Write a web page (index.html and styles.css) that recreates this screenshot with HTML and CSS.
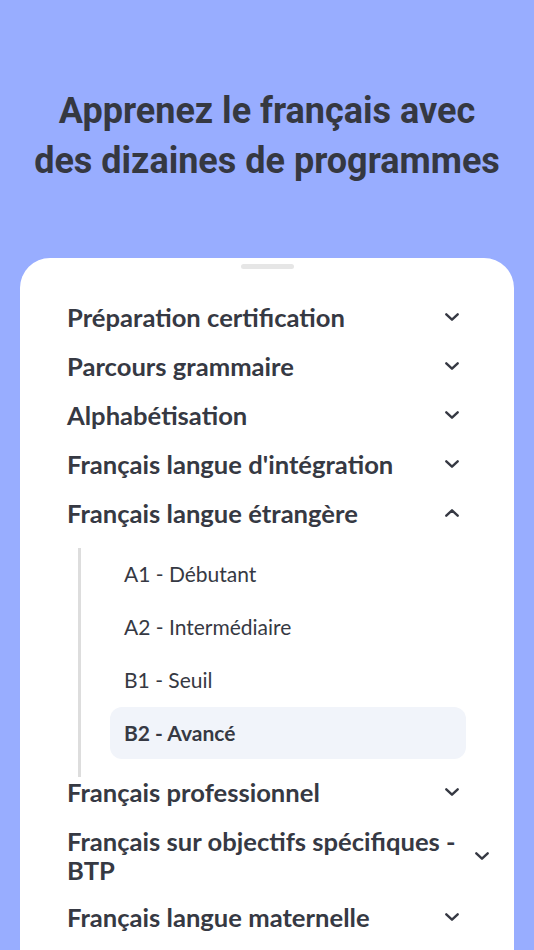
FILE: index.html
```html
<!DOCTYPE html>
<html lang="fr">
<head>
<meta charset="utf-8">
<title>Programmes</title>
<link rel="stylesheet" href="styles.css">
</head>
<body>
<header class="hero">
  <h1 class="hero-title">Apprenez le français avec<br>des dizaines de programmes</h1>
</header>
<main class="sheet">
  <div class="handle"></div>
  <ul class="menu">
    <li class="row"><span class="row-title">Préparation certification</span><svg class="chev" viewBox="0 0 14 8"><polyline points="1.3,1.3 7,6.7 12.7,1.3"/></svg></li>
    <li class="row"><span class="row-title">Parcours grammaire</span><svg class="chev" viewBox="0 0 14 8"><polyline points="1.3,1.3 7,6.7 12.7,1.3"/></svg></li>
    <li class="row"><span class="row-title">Alphabétisation</span><svg class="chev" viewBox="0 0 14 8"><polyline points="1.3,1.3 7,6.7 12.7,1.3"/></svg></li>
    <li class="row"><span class="row-title">Français langue d'intégration</span><svg class="chev" viewBox="0 0 14 8"><polyline points="1.3,1.3 7,6.7 12.7,1.3"/></svg></li>
    <li class="row"><span class="row-title">Français langue étrangère</span><svg class="chev" viewBox="0 0 14 8"><polyline points="1.3,6.7 7,1.3 12.7,6.7"/></svg></li>
    <li class="sub">
      <ul class="sub-list">
        <li class="sub-item">A1 - Débutant</li>
        <li class="sub-item">A2 - Intermédiaire</li>
        <li class="sub-item">B1 - Seuil</li>
        <li class="sub-item sub-item--active">B2 - Avancé</li>
      </ul>
    </li>
    <li class="row"><span class="row-title">Français professionnel</span><svg class="chev" viewBox="0 0 14 8"><polyline points="1.3,1.3 7,6.7 12.7,1.3"/></svg></li>
    <li class="row row--wrap"><span class="row-title">Français sur objectifs spécifiques - BTP</span><svg class="chev" viewBox="0 0 14 8"><polyline points="1.3,1.3 7,6.7 12.7,1.3"/></svg></li>
    <li class="row"><span class="row-title">Français langue maternelle</span><svg class="chev" viewBox="0 0 14 8"><polyline points="1.3,1.3 7,6.7 12.7,1.3"/></svg></li>
  </ul>
</main>
</body>
</html>
```
FILE: styles.css
```css
* { box-sizing: border-box; }
html, body { margin: 0; padding: 0; }
body {
  width: 534px;
  height: 950px;
  overflow: hidden;
  background: #98adff;
  font-family: Lato, "Open Sans", sans-serif;
  color: #363943;
}
.hero {
  height: 258px;
  padding-top: 86px;
}
.hero-title {
  margin: 0;
  font-family: Roboto, "Liberation Sans", sans-serif;
  font-weight: 700;
  font-size: 36px;
  line-height: 50px;
  text-align: center;
  color: #353841;
}
.sheet {
  margin: 0 20px;
  height: 692px;
  background: #fff;
  border-radius: 30px 30px 0 0;
  padding-top: 6px;
}
.handle {
  width: 53px;
  height: 5px;
  margin: 0 auto;
  border-radius: 3px;
  background: #e6e6e6;
}
.menu {
  list-style: none;
  margin: 23.5px 0 0;
  padding: 0 25px 0 47px;
}
.row {
  display: flex;
  align-items: center;
  padding: 10px 0;
}
.row-title {
  width: 378px;
  font-weight: 700;
  font-size: 25.6px;
  line-height: 29px;
}
.chev {
  width: 14px;
  height: 8px;
  flex: none;
  fill: none;
  stroke: #363943;
  stroke-width: 2.4;
  stroke-linecap: round;
  stroke-linejoin: round;
}
.row--wrap {
  padding-bottom: 8px;
}
.row--wrap .row-title {
  width: auto;
  flex: 1;
  padding-right: 10px;
}
.sub {
  margin: 10px 0 -9.5px 11px;
}
.sub-list {
  list-style: none;
  margin: 0;
  padding: 0 0 18.5px 29px;
  border-left: 3px solid #dddddd;
  display: flex;
  flex-direction: column;
  gap: 1px;
  width: 356px;
  box-sizing: content-box;
}
.sub-item {
  height: 52px;
  display: flex;
  align-items: center;
  padding-left: 14px;
  font-size: 21px;
  color: #363943;
  border-radius: 12px;
}
.sub-item--active {
  background: #f1f4fa;
  font-weight: 700;
}
```
